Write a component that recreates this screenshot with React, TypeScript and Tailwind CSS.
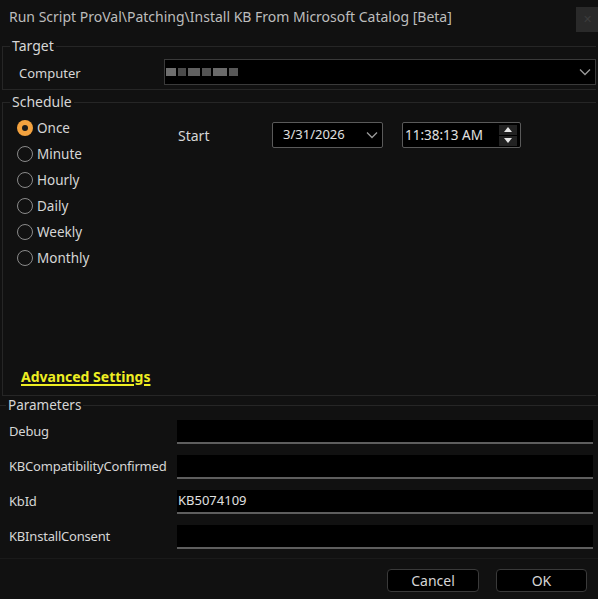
import React from "react";

const font = { fontFamily: '"Noto Sans", "Open Sans", sans-serif' };

function Radio({ label, checked }: { label: string; checked?: boolean }) {
  return (
    <div className="flex h-[26px] items-center gap-[4px]">
      {checked ? (
        <span className="flex h-[16px] w-[16px] items-center justify-center rounded-full bg-[#f3a23f]">
          <span className="h-[6px] w-[6px] rounded-full bg-[#1b1b1b]" />
        </span>
      ) : (
        <span className="h-[16px] w-[16px] rounded-full border-[1.5px] border-[#8a8a8a]" />
      )}
      <span className="text-[13.5px] text-[#d6d6d6]">{label}</span>
    </div>
  );
}

function Chevron() {
  return (
    <svg width="12" height="8" viewBox="0 0 12 8" fill="none">
      <path d="M1 1.5 L6 6.5 L11 1.5" stroke="#9a9a9a" strokeWidth="1.3" />
    </svg>
  );
}

function ParamRow({ label, value }: { label: string; value?: string }) {
  return (
    <div className="flex h-[35px] items-center">
      <span className="w-[177px] shrink-0 pl-[9px] text-[13px] tracking-[-0.2px] text-[#d6d6d6]">{label}</span>
      <div className="flex h-[24px] flex-1 items-center border-b-2 border-[#5e5e5e] bg-black pl-[1px] text-[13px] text-[#e0e0e0]">
        {value}
      </div>
    </div>
  );
}

export default function App() {
  return (
    <div className="flex h-[599px] w-[598px] flex-col overflow-hidden bg-[#111111] text-[#d6d6d6]" style={font}>
      {/* Title bar */}
      <div className="flex h-[37px] items-start justify-between">
        <span className="mt-[6px] pl-[9px] text-[14px] leading-[21px] text-[#bdbdbd]">
          Run Script ProVal\Patching\Install KB From Microsoft Catalog [Beta]
        </span>
        <div className="mt-[7px] flex h-[25px] w-[22px] items-center justify-center bg-[#2a2a2a] text-[11px] text-[#3c3c3c]">
          ✕
        </div>
      </div>

      {/* Target */}
      <fieldset className="mx-[2px] border border-r-0 border-[#262626] px-0 pb-[4px]">
        <legend className="ml-[7px] h-[18px] px-[2px] text-[14px] leading-[18px] text-[#d6d6d6]">Target</legend>
        <div className="mt-[4px] flex h-[26px] items-center">
          <span className="w-[161px] shrink-0 pl-[16px] pt-[3px] text-[13px]">Computer</span>
          <div className="flex h-[26px] flex-1 items-center justify-between border border-[#3a3a3a] bg-black pr-[4px]">
            <span className="flex h-[12px] items-center gap-[2px] pl-[1px] opacity-80 blur-[0.6px]">
              <span className="h-[8px] w-[10px] bg-[#8a8a8a]" />
              <span className="h-[8px] w-[8px] bg-[#5e5e5e]" />
              <span className="h-[8px] w-[12px] bg-[#7a7a7a]" />
              <span className="h-[8px] w-[9px] bg-[#6a6a6a]" />
              <span className="h-[8px] w-[14px] bg-[#858585]" />
              <span className="h-[8px] w-[9px] bg-[#6e6e6e]" />
            </span>
            <Chevron />
          </div>
        </div>
      </fieldset>

      {/* Schedule */}
      <fieldset className="mx-[2px] mt-[3px] h-[303px] border border-r-0 border-[#262626] px-0">
        <legend className="ml-[7px] h-[18px] px-[2px] text-[14px] leading-[18px] text-[#d6d6d6]">Schedule</legend>
        <div className="flex h-[255px] pt-[4px]">
          <div className="flex w-[158px] shrink-0 flex-col pl-[14px]">
            <Radio label="Once" checked />
            <Radio label="Minute" />
            <Radio label="Hourly" />
            <Radio label="Daily" />
            <Radio label="Weekly" />
            <Radio label="Monthly" />
          </div>
          <div className="flex h-[33px] items-end">
            <span className="mb-[2px] w-[111px] shrink-0 pl-[17px] text-[14px]">Start</span>
            <div className="flex h-[26px] w-[111px] items-center justify-between rounded-[2px] border border-[#5a5a5a] bg-black pl-[10px] pr-[4px] text-[13px] text-[#e0e0e0]">
              3/31/2026
              <Chevron />
            </div>
            <div className="ml-[19px] flex h-[26px] w-[119px] items-center justify-between rounded-[2px] border border-[#5a5a5a] bg-black pl-[2px] pr-[3px] text-[13.5px] text-[#e0e0e0]">
              11:38:13 AM
              <div className="flex flex-col gap-[1px]">
                <div className="flex h-[10px] w-[18px] items-center justify-center bg-[#222]">
                  <svg width="8" height="5" viewBox="0 0 8 5"><path d="M0 5 L4 0 L8 5 Z" fill="#e6e6e6" /></svg>
                </div>
                <div className="flex h-[10px] w-[18px] items-center justify-center bg-[#222]">
                  <svg width="8" height="5" viewBox="0 0 8 5"><path d="M0 0 L4 5 L8 0 Z" fill="#e6e6e6" /></svg>
                </div>
              </div>
            </div>
          </div>
        </div>
        <div className="pl-[18px] text-[14px] font-bold text-[#eeee22] underline decoration-[1.5px] underline-offset-[2px]">
          Advanced Settings
        </div>
      </fieldset>

      {/* Parameters */}
      <fieldset className="flex-1 border-t border-[#262626] pr-[5px]">
        <legend className="ml-[6px] h-[18px] px-[2px] text-[13.5px] leading-[18px] text-[#d6d6d6]">Parameters</legend>
        <div>
          <ParamRow label="Debug" />
          <ParamRow label="KBCompatibilityConfirmed" />
          <ParamRow label="KbId" value="KB5074109" />
          <ParamRow label="KBInstallConsent" />
        </div>
      </fieldset>

      {/* Footer */}
      <div className="flex h-[41px] items-center justify-end gap-[17px] border-t border-[#1a1a1a] pr-[11px] pt-[2px]">
        <button className="h-[23px] w-[92px] rounded-[4px] border border-[#3a3a3a] bg-black text-[14px] text-[#d6d6d6]">
          Cancel
        </button>
        <button className="h-[23px] w-[91px] rounded-[4px] border border-[#3a3a3a] bg-black text-[14px] text-[#d6d6d6]">
          OK
        </button>
      </div>
    </div>
  );
}
